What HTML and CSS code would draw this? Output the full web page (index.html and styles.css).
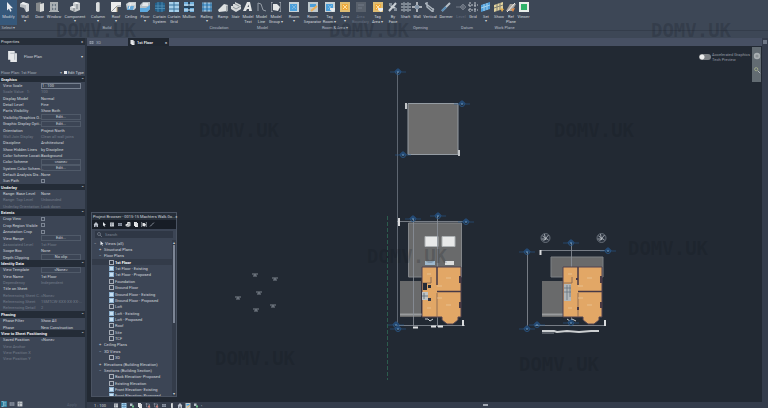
FILE: index.html
```html
<!DOCTYPE html>
<html lang="en">

<head>
    <meta charset="UTF-8">
    <meta name="viewport" content="width=device-width, initial-scale=1.0">
    <title>1st Floor</title>
    <link rel="stylesheet" href="styles.css">
</head>

<body>
    <svg class="defs" aria-hidden="true">
        <symbol id="i-modify" viewBox="0 0 10 10"><path d="M3 0v8.4l1.9-1.7 1.4 3 1.3-.6-1.3-2.9H9z" fill="#e8ebef"/></symbol>
        <symbol id="i-wall" viewBox="0 0 10 10"><path d="M0 2l3-2 6 2v7l-3 1-2-4-4-1z" fill="#b9bdc1"/><path d="M0 2l3-2 6 2-3 1z" fill="#eceeef"/><path d="M6 3l3-1v7l-3 1z" fill="#d7dadc"/></symbol>
        <symbol id="i-door" viewBox="0 0 10 10"><path d="M1 1l5-1v10l-5-1z" fill="#85898b"/><path d="M5 2l4-1v8l-4 1z" fill="#d9dbd9"/></symbol>
        <symbol id="i-window" viewBox="0 0 10 10"><path d="M1 0h8v9h1v1H0V9h1z" fill="#a9aeb1"/><path d="M3 2h4v6H3z" fill="#687480"/><path d="M5 2v6M3 5h4" stroke="#ccd0d2"/></symbol>
        <symbol id="i-component" viewBox="0 0 10 10"><path d="M0 5l3-1V1l3-1 4 1v7l-5 2-5-2z" fill="#c4c7c9"/><path d="M3 1l3-1 4 1-3 1zM0 5l3-1 3 1-2 1z" fill="#f1f2f2"/><path d="M7 2v5M4 6v3" stroke="#777e84"/></symbol>
        <symbol id="i-column" viewBox="0 0 10 10"><path d="M3 1q2-2 4 0v8q-2 2-4 0z" fill="#d9dcdd"/><path d="M6 1h1v8H6z" fill="#a6abad"/></symbol>
        <symbol id="i-roof" viewBox="0 0 10 10"><path d="M0 0h10v5H6v5H0z" fill="#eceded"/><path d="M0 10l6-6h4" stroke="#959b9f" fill="none"/><path d="M6 5v5" stroke="#bfa77d"/></symbol>
        <symbol id="i-ceiling" viewBox="0 0 10 10"><path d="M0 2l3-2h7v6l-2 2H1z" fill="#c9ced1"/><path d="M2 4h6l-1 4H1z" fill="#66a8d8"/><path d="M2 2h7M5 1L3 7" stroke="#edf0f1"/></symbol>
        <symbol id="i-floor" viewBox="0 0 10 10"><path d="M0 3l3-3h7v7l-3 3H0z" fill="#b8c1c7"/><path d="M0 6h6l4-3v4l-3 3H0z" fill="#5ca9df"/><path d="M3 1h5v3H2z" fill="#e4e8ea"/></symbol>
        <symbol id="i-csystem" viewBox="0 0 10 10"><path d="M0 1q5-2 10 0v8q-5 2-10 0z" fill="#235f88"/><path d="M0 4h10M0 6.5h10M3 0v10M7 0v10" stroke="#5793b8" stroke-width=".8"/></symbol>
        <symbol id="i-cgrid" viewBox="0 0 10 10"><path d="M0 0h10v10H0z" fill="#a7d0ea"/><path d="M0 3h10M0 7h10M5 0v10" stroke="#39739c"/></symbol>
        <symbol id="i-mullion" viewBox="0 0 10 10"><path d="M0 0h10v10H0z" fill="#71aeda"/><path d="M5 0v10M0 5h10" stroke="#24445e" stroke-width="2"/><path d="M0 3h10M0 8h10" stroke="#dae8f0"/></symbol>
        <symbol id="i-railing" viewBox="0 0 10 10"><path d="M0 1h10v8H0z" fill="#559cd0"/><path d="M0 1h10M0 5h10M0 9h10" stroke="#c5dbe9"/><path d="M1 0v10M9 0v10M5 0v10" stroke="#2f638a"/></symbol>
        <symbol id="i-ramp" viewBox="0 0 10 10"><path d="M0 8l6-6 4 1v6l-9 1z" fill="#dee1e2"/><path d="M8 4l2-1v6l-2 1z" fill="#9ca2a6"/></symbol>
        <symbol id="i-stair" viewBox="0 0 10 10"><path d="M0 4h2V2h2V0l6 3v4L5 10 0 7z" fill="#d6d9da"/><path d="M2 5l3 2 5-3M4 2l4 2" stroke="#8f979d" fill="none"/></symbol>
        <symbol id="i-mtext" viewBox="0 0 10 10"><path d="M0 9l4-9h3l2 9H6V7H4L3 9z" fill="#e2e4e5"/><path d="M4.5 5L5.600 2.500 6 5z" fill="#48515e"/></symbol>
        <symbol id="i-mline" viewBox="0 0 10 10"><path d="M1 1q4 0 4 4t4 4M1 1v8" stroke="#929aa4" fill="none"/></symbol>
        <symbol id="i-mgroup" viewBox="0 0 10 10"><path d="M2 0H0v10h2M8 0h2v10H8" stroke="#b9bec5" fill="none"/><path d="M2 2h4l3 3-2 4-5-1z" fill="#e5e7e8"/></symbol>
        <symbol id="i-room" viewBox="0 0 10 10"><path d="M0 0h10v10H0z" fill="#c7d1d6"/><path d="M1 2h7v7H1z" fill="#4b9fda"/><path d="M3 3l4 4M7 3L3 7" stroke="#7ab8e2"/></symbol>
        <symbol id="i-rsep" viewBox="0 0 10 10"><path d="M0 0h10v10H0z" fill="#bec9ce"/><path d="M2 2h6v3H2z" fill="#4b9fda"/><path d="M3 9l6-5" stroke="#e8ad58" stroke-width="2"/></symbol>
        <symbol id="i-area" viewBox="0 0 10 10"><path d="M0 0h10v10H0z" fill="#dfbd73"/><path d="M2 2h6v6H2z" fill="#efaa3c"/><path d="M3 3l4 4M7 3L3 7" stroke="#ffe0a0"/></symbol>
        <symbol id="i-adim" viewBox="0 0 10 10"><path d="M0 0h10v10H0z" fill="#59616c"/><path d="M2 3h6M2 6h4" stroke="#727b86"/></symbol>
        <symbol id="i-tag" viewBox="0 0 10 10"><path d="M5 6h5v2L8 10 5 8z" fill="#e8ebed"/></symbol>
        <symbol id="i-face" viewBox="0 0 10 10"><path d="M1 9l7-8M2 3l6 4" stroke="#cbd0d5" stroke-width="2"/><path d="M1 1h3v3H1zM6 6h3v3H6z" fill="#858f9a"/></symbol>
        <symbol id="i-shaft" viewBox="0 0 10 10"><path d="M0 2h10M0 5h10M0 8h10" stroke="#c7cdd2"/><path d="M3 0v10M7 0v10" stroke="#7f8a97" stroke-width="1.500"/></symbol>
        <symbol id="i-owall" viewBox="0 0 10 10"><path d="M5 0v10M0 5h3M7 5h3" stroke="#cfd4d8" stroke-width="1.500"/><path d="M3 3h4v4H3z" fill="#8292a4"/></symbol>
        <symbol id="i-vert" viewBox="0 0 10 10"><path d="M0 1l9 7M2 0v5l6 5V6" stroke="#aab3bc" stroke-width="1.500" fill="none"/></symbol>
        <symbol id="i-dormer" viewBox="0 0 10 10"><path d="M1 9L9 1" stroke="#b8c0c8" stroke-width="2"/><path d="M1 9l4-4" stroke="#578bb5" stroke-width="2"/></symbol>
        <symbol id="i-level" viewBox="0 0 10 10"><path d="M0 5h7M7 2v6M4 5l3-3 3 3-3 3z" stroke="#707985" fill="#5a6370"/></symbol>
        <symbol id="i-grid" viewBox="0 0 10 10"><path d="M2 0v10M7 0v10M0 3h10M0 8h10" stroke="#c3c9cf" stroke-dasharray="2 1"/></symbol>
        <symbol id="i-set" viewBox="0 0 10 10"><path d="M0 3l9-3v7l-9 3z" fill="#4d9cd9"/><path d="M0 6l9-3M3 2v7M6 1v7" stroke="#a1d1ef"/></symbol>
        <symbol id="i-show" viewBox="0 0 10 10"><path d="M0 3l9-3v7l-9 3z" fill="#e2d39e"/><path d="M0 6l9-3M3 2v7M6 1v7" stroke="#7c7c70"/><path d="M6 6l4 1-2 3z" fill="#e5ad4b"/></symbol>
        <symbol id="i-ref" viewBox="0 0 10 10"><path d="M0 9l4-7h6L6 9z" fill="#a8a39c"/><path d="M1 10l8-9" stroke="#eee"/><path d="M5 7l4-1-2 4z" fill="#e38d49"/></symbol>
        <symbol id="i-viewer" viewBox="0 0 10 10"><path d="M0 0h10v10H0z" fill="#e8eeea"/><path d="M2 2h6v6H2z" fill="#2eb269"/></symbol>
        <symbol id="i-sheet" viewBox="0 0 10 10"><path d="M1 0h6v2h2v8H3V8H1z" fill="#e6e8ea"/><path d="M3 2h4v6" stroke="#b5bac1" fill="none"/></symbol>
        <symbol id="i-home" viewBox="0 0 10 10"><path d="M0 5l5-5 5 5H9v5H6V7H4v3H1V5z" fill="#b9bfc9"/></symbol>
        <symbol id="i-cube" viewBox="0 0 10 10"><path d="M1 2h8v6H1z" fill="#8b93a1"/><path d="M1 5h8M5 2v6" stroke="#5b6475"/></symbol>
        <symbol id="i-list" viewBox="0 0 10 10"><path d="M1 1h8v8H1z" fill="#c8ccd1"/><path d="M1 4h8M4 1v8" stroke="#777e88"/></symbol>
        <symbol id="i-link" viewBox="0 0 10 10"><path d="M1 9l3-3M6 4l3-3M3 7l4-4" stroke="#777e88" stroke-width="2"/></symbol>
        <symbol id="i-search" viewBox="0 0 10 10"><circle cx="4" cy="4" r="3" fill="none" stroke="#9ba3b0"/><path d="M6 6l4 4" stroke="#9ba3b0"/></symbol>
        <symbol id="i-sun" viewBox="0 0 10 10"><path d="M1 1h5v5H1z" fill="#b7c0c9"/><path d="M5 5h4v4H5z" fill="#6fbd88"/></symbol>
        <symbol id="i-crop" viewBox="0 0 10 10"><path d="M2 0v8h8M0 2h8v8" stroke="#a5afbc" fill="none"/><path d="M5 5h4v4H5z" fill="#c77f78"/></symbol>
        <symbol id="i-tree" viewBox="0 0 10 10"><path d="M1 1h3v8H1M5 2h4M5 5h4M5 8h4" stroke="#cfe6f4" fill="none"/></symbol>
    </svg>

    <header class="ribbon">
        <section class="group select">
            <div class="tools">
                <button class="tool active"><svg><use href="#i-modify"/></svg>Modify</button>
            </div>
            <h2>Select ▾</h2>
        </section>
        <section class="group build">
            <div class="tools">
                <button class="tool more"><svg><use href="#i-wall"/></svg>Wall</button>
                <button class="tool"><svg><use href="#i-door"/></svg>Door</button>
                <button class="tool"><svg><use href="#i-window"/></svg>Window</button>
                <button class="tool more"><svg><use href="#i-component"/></svg>Component</button>
                <button class="tool more"><svg><use href="#i-column"/></svg>Column</button>
                <button class="tool more"><svg><use href="#i-roof"/></svg>Roof</button>
                <button class="tool"><svg><use href="#i-ceiling"/></svg>Ceiling</button>
                <button class="tool more"><svg><use href="#i-floor"/></svg>Floor</button>
                <button class="tool"><svg><use href="#i-csystem"/></svg>Curtain<br>System</button>
                <button class="tool"><svg><use href="#i-cgrid"/></svg>Curtain<br>Grid</button>
                <button class="tool"><svg><use href="#i-mullion"/></svg>Mullion</button>
            </div>
            <h2>Build</h2>
        </section>
        <section class="group circulation">
            <div class="tools">
                <button class="tool more"><svg><use href="#i-railing"/></svg>Railing</button>
                <button class="tool"><svg><use href="#i-ramp"/></svg>Ramp</button>
                <button class="tool"><svg><use href="#i-stair"/></svg>Stair</button>
            </div>
            <h2>Circulation</h2>
        </section>
        <section class="group model">
            <div class="tools">
                <button class="tool"><svg><use href="#i-mtext"/></svg>Model<br>Text</button>
                <button class="tool"><svg><use href="#i-mline"/></svg>Model<br>Line</button>
                <button class="tool"><svg><use href="#i-mgroup"/></svg>Model<br>Group ▾</button>
            </div>
            <h2>Model</h2>
        </section>
        <section class="group room">
            <div class="tools">
                <button class="tool more"><svg><use href="#i-room"/></svg>Room</button>
                <button class="tool"><svg><use href="#i-rsep"/></svg>Room<br>Separator</button>
                <button class="tool"><svg><use href="#i-room"/><use href="#i-tag"/></svg>Tag<br>Room ▾</button>
                <button class="tool more"><svg><use href="#i-area"/></svg>Area</button>
                <button class="tool" disabled><svg><use href="#i-adim"/></svg>Area<br>Boundary</button>
                <button class="tool"><svg><use href="#i-area"/><use href="#i-tag"/></svg>Tag<br>Area ▾</button>
            </div>
            <h2>Room &amp; Area ▾</h2>
        </section>
        <section class="group opening">
            <div class="tools">
                <button class="tool"><svg><use href="#i-face"/></svg>By<br>Face</button>
                <button class="tool"><svg><use href="#i-shaft"/></svg>Shaft</button>
                <button class="tool"><svg><use href="#i-owall"/></svg>Wall</button>
                <button class="tool"><svg><use href="#i-vert"/></svg>Vertical</button>
                <button class="tool"><svg><use href="#i-dormer"/></svg>Dormer</button>
            </div>
            <h2>Opening</h2>
        </section>
        <section class="group datum">
            <div class="tools">
                <button class="tool" disabled><svg><use href="#i-level"/></svg>Level</button>
                <button class="tool"><svg><use href="#i-grid"/></svg>Grid</button>
            </div>
            <h2>Datum</h2>
        </section>
        <section class="group plane">
            <div class="tools">
                <button class="tool more"><svg><use href="#i-set"/></svg>Set</button>
                <button class="tool"><svg><use href="#i-show"/></svg>Show</button>
                <button class="tool"><svg><use href="#i-ref"/></svg>Ref<br>Plane</button>
                <button class="tool"><svg><use href="#i-viewer"/></svg>Viewer</button>
            </div>
            <h2>Work Plane</h2>
        </section>
    </header>
    <div class="options"></div>

    <div class="workspace">
        <aside class="properties">
            <h1 class="panel-title">Properties<button>×</button></h1>
            <div class="type">
                <svg><use href="#i-sheet"/></svg>
                <span>Floor Plan</span>
                <button>▾</button>
            </div>
            <div class="instance">
                <span>Floor Plan: 1st Floor</span>
                <span>▾</span>
                <button><i></i>Edit Type</button>
            </div>
            <table>
                <tbody>
                    <tr class="section"><th colspan="2">Graphics</th></tr>
                    <tr><th><label for="scale">View Scale</label></th><td><select id="scale"><option>1 : 100</option></select></td></tr>
                    <tr class="off"><th>Scale Value&nbsp;&nbsp; 1:</th><td>100</td></tr>
                    <tr><th>Display Model</th><td>Normal</td></tr>
                    <tr><th>Detail Level</th><td>Fine</td></tr>
                    <tr><th>Parts Visibility</th><td>Show Both</td></tr>
                    <tr><th>Visibility/Graphics O...</th><td><button>Edit...</button></td></tr>
                    <tr><th>Graphic Display Opti...</th><td><button>Edit...</button></td></tr>
                    <tr><th>Orientation</th><td>Project North</td></tr>
                    <tr class="off"><th>Wall Join Display</th><td>Clean all wall joins</td></tr>
                    <tr><th>Discipline</th><td>Architectural</td></tr>
                    <tr><th>Show Hidden Lines</th><td>by Discipline</td></tr>
                    <tr><th>Color Scheme Locati...</th><td>Background</td></tr>
                    <tr><th>Color Scheme</th><td><button>&lt;none&gt;</button></td></tr>
                    <tr><th>System Color Schem...</th><td><button>Edit...</button></td></tr>
                    <tr><th>Default Analysis Dis...</th><td>None</td></tr>
                    <tr><th><label for="sun">Sun Path</label></th><td><input type="checkbox" id="sun"></td></tr>
                    <tr class="section"><th colspan="2">Underlay</th></tr>
                    <tr><th>Range: Base Level</th><td>None</td></tr>
                    <tr class="off"><th>Range: Top Level</th><td>Unbounded</td></tr>
                    <tr class="off"><th>Underlay Orientation</th><td>Look down</td></tr>
                    <tr class="section"><th colspan="2">Extents</th></tr>
                    <tr><th><label for="crop">Crop View</label></th><td><input type="checkbox" id="crop"></td></tr>
                    <tr><th><label for="region">Crop Region Visible</label></th><td><input type="checkbox" id="region"></td></tr>
                    <tr><th><label for="anno">Annotation Crop</label></th><td><input type="checkbox" id="anno"></td></tr>
                    <tr><th>View Range</th><td><button>Edit...</button></td></tr>
                    <tr class="off"><th>Associated Level</th><td>1st Floor</td></tr>
                    <tr><th>Scope Box</th><td>None</td></tr>
                    <tr><th>Depth Clipping</th><td><button>No clip</button></td></tr>
                    <tr class="section"><th colspan="2">Identity Data</th></tr>
                    <tr><th>View Template</th><td><button>&lt;None&gt;</button></td></tr>
                    <tr><th>View Name</th><td>1st Floor</td></tr>
                    <tr class="off"><th>Dependency</th><td>Independent</td></tr>
                    <tr><th>Title on Sheet</th><td></td></tr>
                    <tr class="off"><th>Referencing Sheet C...</th><td>&lt;None&gt;</td></tr>
                    <tr class="off"><th>Referencing Sheet</th><td>15MTCW-XXX-XX-XX-...</td></tr>
                    <tr class="off"><th>Referencing Detail</th><td>2</td></tr>
                    <tr class="section"><th colspan="2">Phasing</th></tr>
                    <tr><th>Phase Filter</th><td>Show All</td></tr>
                    <tr><th>Phase</th><td>New Construction</td></tr>
                    <tr class="section"><th colspan="2">View to Sheet Positioning</th></tr>
                    <tr><th>Saved Position</th><td>&lt;None&gt;</td></tr>
                    <tr class="off"><th>View Anchor</th><td></td></tr>
                    <tr class="off"><th>View Position X</th><td></td></tr>
                    <tr class="off"><th>View Position Y</th><td></td></tr>
                </tbody>
            </table>
            <div class="props-foot">
                <svg class="on"><use href="#i-tree"/></svg>
                <svg><use href="#i-cube"/></svg>
                <svg><use href="#i-list"/></svg>
                <span>Apply</span>
            </div>
        </aside>

        <main class="view">
            <nav class="tabs">
                <a class="tab" href="#view3d"><svg><use href="#i-cube"/></svg>3D</a>
                <a class="tab current" href="#drawing"><svg><use href="#i-sheet"/></svg>1st Floor<b>×</b></a>
            </nav>
            <div class="stage">
                <svg id="drawing" class="drawing" viewBox="87 46 675 356" preserveAspectRatio="xMinYMin meet">
                    <defs>
                        <g id="mark" fill="none" stroke="#2a5d92">
                            <path d="M-8 0H8" stroke-width=".6"/>
                            <circle r="2.500" stroke-width=".8"/>
                            <path d="M-4 0L0-4 4 0z" fill="#244a75" stroke="none"/>
                            <path d="M-1 0h2" stroke="#6d9cc4"/>
                        </g>
                        <g id="note" stroke="#969ca5" stroke-width=".8">
                            <path d="M-3-1H3M-2 1H2M-1 0H1"/>
                        </g>
                        <g id="compass">
                            <circle r="4.500" fill="#2c3440" stroke="#737b85" stroke-width=".8"/>
                            <path d="M-3-2L3 2M3-3L-2 3M-1-4L0 2M-4 1H1" stroke="#b9bec4" stroke-width=".8"/>
                        </g>
                        <g id="rooms">
                            <path d="M422 267h39v50h-3v3l-5 4h-6l-5-4v-3h-20z" fill="#e2a766"/>
                            <path d="M422 267v50h20v3l5 4h6l5-4v-3h3v-50z" fill="none" stroke="#504351"/>
                            <path d="M437 267v18M437 291.500h24" stroke="#463947" fill="none" stroke-width="1.500"/>
                            <path d="M437 293v24M422 283h9v-6" stroke="#7d5f51" fill="none" stroke-width=".8"/>
                            <path d="M459 276h2v7h-2zM459 302h2v6h-2z" fill="#4b3a43"/>
                            <path d="M446 278h5M446 305h5M427 274h4M427 308h4M437 286h5M437 298h5" stroke="#ebc699" stroke-width=".8"/>
                        </g>
                    </defs>

                    <path d="M387.500 216v164" stroke="#2f6a55" stroke-width=".8" stroke-dasharray="4 2"/>

                    <!-- roof plan -->
                    <path d="M397.500 70v256" stroke="#6d7682" stroke-width=".8"/>
                    <path d="M408 103.500h50v51h-50z" fill="#6d6d6d" stroke="#959ca3"/>
                    <path d="M406 103v6M459 150v6" stroke="#c3c6c9" stroke-width="2"/>
                    <use href="#mark" x="398" y="72"/>
                    <use href="#mark" x="462" y="104"/>
                    <use href="#mark" x="403" y="155"/>

                    <!-- proposed first floor -->
                    <path d="M408.500 223h53v54h-53z" fill="#696a6b" stroke="#83868a"/>
                    <path d="M400 281h21v36h-21z" fill="#696a6b"/>
                    <path d="M400 314.500h22" stroke="#999b9d" stroke-width="2"/>
                    <path d="M425 236.500h13v10h-13zM442 236.500h13v10h-13z" fill="#e8e9e9" stroke="#aeb2b4"/>
                    <path d="M425 261h10v4h-10z" fill="#9fb9ce"/>
                    <path d="M445 261h9v4h-9z" fill="#dcdede"/>
                    <path d="M397 221.500h70M397 325.500h68M413.500 217v109M437.500 215v112" stroke="#8b929b" stroke-width=".8"/>
                    <use href="#rooms"/>
                    <path d="M423 283h4v7h-4zM428 285h3v3h-3z" fill="#272c38"/>
                    <path d="M422 292h6v8h-6z" fill="#bfc3c4"/>
                    <path d="M424 293v6M422 296h6" stroke="#586472" stroke-width=".8"/>
                    <path d="M428 298h3v3h-3z" fill="#343744"/>
                    <path d="M425 319h3l2 2 3-2" stroke="#c9cdd1" fill="none"/>
                    <path d="M399 218v8M463 320v6" stroke="#dadcde" stroke-width="2"/>
                    <path d="M413 327.500h5M431 326.500h5M438 326.500h5" stroke="#dfe1e3" stroke-width="2"/>
                    <use href="#mark" x="413" y="219"/>
                    <use href="#mark" x="438" y="216"/>
                    <use href="#mark" x="466" y="222"/>
                    <use href="#mark" x="396" y="325"/>
                    <use href="#mark" x="398" y="329"/>

                    <!-- existing first floor -->
                    <path d="M551 257h52v20h-52z" fill="#696a6b" stroke="#7d8084"/>
                    <path d="M542 281h21v36h-21z" fill="#696a6b"/>
                    <path d="M542 314.500h22" stroke="#999b9d" stroke-width="2"/>
                    <path d="M527.500 252v77M541 250.500h68M535 325.500h71M571.500 242v80" stroke="#8b929b" stroke-width=".8"/>
                    <use href="#rooms" x="141"/>
                    <path d="M564 284h7v17h-7z" fill="#b2b7ba"/>
                    <path d="M567 285v15M570 285v12M564 288h7M564 292h7" stroke="#65717e" stroke-width=".8"/>
                    <path d="M577 307h2v3h-2zM576 278h2v2h-2z" fill="#463947"/>
                    <path d="M567 319l3 2 2-2 4 2" stroke="#c9cdd1" fill="none"/>
                    <path d="M540.500 250v5M605 320v6" stroke="#dadcde" stroke-width="2"/>
                    <path d="M542 331h12l3 1 10-1 12 1 12-1h8" stroke="#cdd0d2" stroke-width="2" fill="none"/>
                    <path d="M542 333h12" stroke="#8f969e"/>
                    <use href="#compass" x="545.500" y="238"/>
                    <use href="#compass" x="601.500" y="238"/>
                    <use href="#mark" x="571" y="243"/>
                    <use href="#mark" x="608" y="251"/>
                    <use href="#mark" x="527" y="252"/>
                    <use href="#mark" x="537" y="325"/>
                    <use href="#mark" x="571" y="323"/>
                    <use href="#mark" x="527" y="329"/>

                    <use href="#note" x="255" y="275"/>
                    <use href="#note" x="275" y="279"/>
                    <use href="#note" x="259" y="293"/>
                    <use href="#note" x="238" y="298"/>
                    <use href="#note" x="273" y="306"/>
                    <use href="#note" x="256" y="310"/>
                </svg>

                <label class="preview"><input type="checkbox"><span>Accelerated Graphics<br>Tech Preview</span></label>
                <div class="navbar">
                    <button aria-label="Wheel"><svg viewBox="0 0 10 10"><circle cx="5" cy="5" r="4" fill="#a9afb2"/><circle cx="5" cy="5" r="2" fill="#8b9296"/></svg></button>
                    <button aria-label="Zoom"><svg viewBox="0 0 10 10"><circle cx="4" cy="4" r="2" fill="none" stroke="#a9b48e"/><path d="M6 6l3 3" stroke="#c3c8c9"/></svg></button>
                </div>
            </div>
            <footer class="status">
                <span>1 : 100</span>
                <svg><use href="#i-list"/></svg>
                <svg><use href="#i-cgrid"/></svg>
                <svg><use href="#i-sun"/></svg>
                <svg><use href="#i-sheet"/></svg>
                <svg><use href="#i-crop"/></svg>
                <svg><use href="#i-crop"/></svg>
                <svg><use href="#i-cube"/></svg>
                <svg><use href="#i-column"/></svg>
                <svg><use href="#i-home"/></svg>
                <svg><use href="#i-rsep"/></svg>
                <svg><use href="#i-sun"/></svg>
                <span>‹</span>
                <div class="hscroll"><i></i></div>
            </footer>
        </main>
        <div class="vscroll"><i></i></div>
    </div>

    <section class="browser">
        <h1 class="panel-title">Project Browser - 0015-15 Machters Walk.0o...<button>×</button></h1>
        <div class="browser-tools">
            <svg><use href="#i-home"/></svg>
            <svg><use href="#i-modify"/></svg>
            <svg><use href="#i-list"/></svg>
            <svg><use href="#i-cube"/></svg>
            <svg><use href="#i-component"/></svg>
            <svg><use href="#i-sheet"/></svg>
            <svg><use href="#i-mgroup"/></svg>
            <svg><use href="#i-link"/></svg>
        </div>
        <label class="search"><svg><use href="#i-search"/></svg><input type="text" placeholder="Search" aria-label="Search"></label>
        <div class="tree">
            <ul>
                <li class="l0"><b>−</b><svg><use href="#i-modify"/></svg>Views (all)</li>
                <li class="l1"><b>+</b>Structural Plans</li>
                <li class="l1"><b>−</b>Floor Plans</li>
                <li class="l2 open"><i></i>1st Floor</li>
                <li class="l2"><i class="placed"></i>1st Floor - Existing</li>
                <li class="l2"><i class="placed"></i>1st Floor - Proposed</li>
                <li class="l2"><i></i>Foundation</li>
                <li class="l2"><i></i>Ground Floor</li>
                <li class="l2"><i class="placed"></i>Ground Floor - Existing</li>
                <li class="l2"><i class="placed"></i>Ground Floor - Proposed</li>
                <li class="l2"><i></i>Loft</li>
                <li class="l2"><i class="placed"></i>Loft - Existing</li>
                <li class="l2"><i class="placed"></i>Loft - Proposed</li>
                <li class="l2"><i></i>Roof</li>
                <li class="l2"><i></i>Site</li>
                <li class="l2"><i></i>TCF</li>
                <li class="l1"><b>+</b>Ceiling Plans</li>
                <li class="l1"><b>−</b>3D Views</li>
                <li class="l2"><i></i>3D</li>
                <li class="l1"><b>+</b>Elevations (Building Elevation)</li>
                <li class="l1"><b>−</b>Sections (Building Section)</li>
                <li class="l2"><i></i>Back Elevation- Proposed</li>
                <li class="l2"><i></i>Existing Elevation</li>
                <li class="l2"><i class="placed"></i>Front Elevation- Existing</li>
                <li class="l2"><i class="placed"></i>Front Elevation- Proposed</li>
            </ul>
            <div class="tree-scroll"><span>▴</span><i></i><span>▾</span></div>
        </div>
    </section>

    <svg class="watermark" viewBox="0 0 768 408" preserveAspectRatio="xMinYMin meet">
        <text x="96" y="37">DOMV.UK</text>
        <text x="369" y="37">DOMV.UK</text>
        <text x="691" y="37">DOMV.UK</text>
        <text x="239" y="137">DOMV.UK</text>
        <text x="594" y="137">DOMV.UK</text>
        <text x="407" y="263">DOMV.UK</text>
        <text x="668" y="255">DOMV.UK</text>
        <text x="255" y="365">DOMV.UK</text>
        <text x="559" y="371">DOMV.UK</text>
    </svg>
</body>

</html>
```
FILE: styles.css
```css
* {
    box-sizing: border-box;
}

body {
    display: flex;
    flex-direction: column;
    height: 100vh;
    margin: 0;
    overflow: hidden;
    background-color: #222933;
    color: #d2d6dc;
    font-family: Roboto, 'Open Sans', sans-serif;
    font-size: 4px;
    line-height: 5px;
}

h1,
h2 {
    margin: 0;
    font-size: 4px;
    font-weight: normal;
}

button,
input,
select {
    margin: 0;
    padding: 0;
    border: 0;
    background: none;
    color: inherit;
    font: inherit;
}

svg {
    display: block;
    flex: none;
    width: 6px;
    height: 6px;
}

.defs {
    position: absolute;
    width: 0;
    height: 0;
}

/* ribbon */
.ribbon {
    display: flex;
    flex: none;
    height: 31px;
    background-color: #3d4756;
    border-bottom: 1px solid #343d4b;
}

.group {
    display: flex;
    flex-direction: column;
    justify-content: space-between;
    text-align: center;
}

.group h2 {
    color: #b3b9c3;
    line-height: 5px;
}

.tools {
    display: grid;
    height: 25px;
}

.select .tools { grid-template-columns: 17px; }
.build .tools { grid-template-columns: 16px 13px 16px 26px 20px 16px 14px 14px 15px 14px 16px; }
.circulation .tools { grid-template-columns: 19px 14px 11px; }
.model .tools { grid-template-columns: 14px 13px 16px; }
.room .tools { grid-template-columns: 20px 17px 17px 14px 17px 17px; }
.opening .tools { grid-template-columns: 14px 11px 12px 14px 18px; }
.datum .tools { grid-template-columns: 12px 12px; }
.plane .tools { grid-template-columns: 14px 12px 12px 13px; }

.tool {
    display: flex;
    flex-direction: column;
    align-items: center;
    padding-top: 2px;
    white-space: nowrap;
    line-height: 5px;
}

.tool svg {
    width: 10px;
    height: 10px;
    margin-bottom: 2px;
}

.tool.active {
    background-color: #36587a;
}

.tool.more::after {
    content: '▾';
    line-height: 3px;
}

.tool:disabled {
    color: #667080;
}

.options {
    flex: none;
    height: 7px;
    background-color: #3d4756;
}

.workspace {
    display: flex;
    flex: 1;
    min-height: 0;
}

/* properties */
.properties {
    display: flex;
    flex: none;
    flex-direction: column;
    width: 87px;
    background-color: #3c4555;
    border-right: 2px solid #2d3643;
}

.panel-title {
    display: flex;
    flex: none;
    justify-content: space-between;
    height: 7px;
    padding: 1px;
    background-color: #262e39;
    white-space: nowrap;
}

.panel-title button {
    width: 4px;
}

.type {
    display: flex;
    flex: none;
    align-items: center;
    height: 23px;
    padding: 0 2px 0 7px;
}

.type svg {
    width: 11px;
    height: 11px;
}

.type span {
    flex: 1;
    padding-left: 6px;
}

.instance {
    display: flex;
    flex: none;
    align-items: center;
    justify-content: space-between;
    height: 8px;
    padding: 0 1px;
    color: #a5adb9;
}

.instance span:nth-child(2) {
    margin-left: auto;
    margin-right: 2px;
}

.instance button {
    display: flex;
    align-items: center;
    gap: 1px;
    color: #d2d6dc;
}

.instance i {
    width: 3px;
    height: 3px;
    background-color: #e4e7ea;
}

.properties table {
    display: block;
    flex: 1;
    min-height: 0;
}

.properties tbody {
    display: grid;
    grid-auto-rows: 1fr;
    height: 100%;
}

.properties tr {
    display: grid;
    grid-template-columns: 38px 41px;
    align-items: center;
    min-height: 0;
    padding-left: 3px;
}

.properties th,
.properties td {
    padding: 0;
    text-align: left;
    font-weight: normal;
    white-space: nowrap;
}

.properties .section {
    display: flex;
    justify-content: space-between;
    padding: 0 1px;
    background-color: #242c37;
    color: #eceef1;
}

.properties .section th {
    font-weight: bold;
}

.section::after {
    content: '⌃';
}

.properties .off {
    color: #747d8b;
}

td button,
td select {
    display: block;
    width: 40px;
    height: 6px;
    border: 1px solid #505a69;
    line-height: 4px;
    text-align: center;
}

td select {
    appearance: none;
    border-color: #778190;
    text-align: left;
}

td input {
    display: block;
    width: 4px;
    height: 4px;
    appearance: none;
    border: 1px solid #7c8593;
}

.props-foot {
    display: flex;
    flex: none;
    align-items: flex-end;
    gap: 2px;
    height: 46px;
    padding: 0 8px 1px 1px;
    color: #596373;
}

.props-foot .on {
    background-color: #1f7596;
}

.props-foot span {
    margin-left: auto;
}

/* view */
.view {
    display: flex;
    flex: 1;
    flex-direction: column;
    min-width: 0;
}

.tabs {
    display: flex;
    flex: none;
    height: 8px;
    background-color: #475063;
}

.tab {
    display: flex;
    align-items: center;
    gap: 2px;
    width: 41px;
    padding: 0 2px;
    color: #a2a9b6;
    text-decoration: none;
}

.tab svg {
    width: 5px;
    height: 5px;
}

.tab.current {
    background-color: #202731;
    color: #e2e5e9;
    font-weight: bold;
}

.tab.current b {
    margin-left: auto;
}

.stage {
    position: relative;
    flex: 1;
    min-height: 0;
}

.drawing {
    width: 100%;
    height: 100%;
}

.preview {
    position: absolute;
    top: 6px;
    right: 12px;
    display: flex;
    align-items: center;
    gap: 1px;
    color: #9299a3;
}

.preview input {
    width: 12px;
    height: 6px;
    appearance: none;
    border-radius: 3px;
    background: radial-gradient(circle at 3px 3px, #eee 2px, #7d8185 3px);
}

.navbar {
    position: absolute;
    top: 1px;
    right: 1px;
    display: flex;
    flex-direction: column;
    gap: 6px;
    width: 9px;
    height: 35px;
    padding-top: 5px;
    background-color: #626b72;
}

.navbar button {
    display: flex;
    justify-content: center;
}

.navbar svg {
    width: 8px;
    height: 8px;
}

.status {
    display: flex;
    flex: none;
    align-items: center;
    gap: 2px;
    height: 6px;
    padding-left: 7px;
    background-color: #343c4b;
}

.status svg {
    width: 6px;
    height: 5px;
}

.status span {
    padding-right: 5px;
}

.hscroll {
    flex: 1;
    height: 6px;
    padding: 2px 0;
}

.hscroll i {
    display: block;
    width: 5px;
    height: 2px;
    margin: 0 auto;
    background-color: #a3a9b3;
}

.vscroll {
    flex: none;
    width: 6px;
    padding: 2px 1px;
    background-color: #343c4b;
}

.vscroll i {
    display: block;
    height: 4px;
    background-color: #6e7786;
}

/* project browser */
.browser {
    position: absolute;
    top: 212px;
    bottom: 11px;
    left: 91px;
    display: flex;
    flex-direction: column;
    width: 86px;
    border: 1px solid #4a5362;
    background-color: #3c4555;
}

.browser-tools {
    display: flex;
    flex: none;
    align-items: center;
    gap: 2px;
    height: 9px;
    padding: 0 1px;
    background-color: #171d26;
}

.browser-tools svg {
    height: 5px;
}

.search {
    display: flex;
    flex: none;
    align-items: center;
    gap: 3px;
    height: 7px;
    margin: 2px 3px;
    padding: 0 2px;
    background-color: #2f3745;
}

.search svg {
    width: 5px;
    height: 5px;
}

.search input {
    flex: 1;
    min-width: 0;
}

.search input::placeholder {
    color: #7c8593;
}

.tree {
    display: flex;
    flex: 1;
    min-height: 0;
    overflow: hidden;
}

.tree ul {
    display: grid;
    flex: 1;
    grid-auto-rows: 1fr;
    height: calc(100% + 3px);
    margin: 0;
    padding: 0;
    list-style: none;
}

.tree li {
    display: flex;
    align-items: center;
    gap: 1px;
    min-height: 0;
    white-space: nowrap;
}

.tree b {
    width: 4px;
    font-weight: normal;
}

.tree svg {
    width: 5px;
    height: 5px;
}

.tree li i {
    width: 5px;
    height: 5px;
    border: 1px solid #a7adb7;
}

.tree li .placed {
    border-color: #8fb3d1;
    background-color: #c8e0f2;
}

.l0 { padding-left: 2px; }
.l1 { padding-left: 7px; }
.l2 { padding-left: 17px; }

.tree .open {
    background-color: #333b49;
    color: #fff;
    font-weight: bold;
}

.tree-scroll {
    display: flex;
    flex: none;
    flex-direction: column;
    justify-content: space-between;
    align-items: center;
    width: 4px;
    background-color: #343c4a;
}

.tree-scroll i {
    width: 2px;
    height: 50%;
    margin-bottom: auto;
    background-color: #7c8595;
}

/* watermark */
.watermark {
    position: absolute;
    inset: 0;
    width: 100%;
    height: 100%;
    pointer-events: none;
}

.watermark text {
    fill: #10151d;
    fill-opacity: .2;
    font-family: 'DejaVu Sans Mono', monospace;
    font-size: 19px;
    font-weight: bold;
    text-anchor: middle;
}
```
